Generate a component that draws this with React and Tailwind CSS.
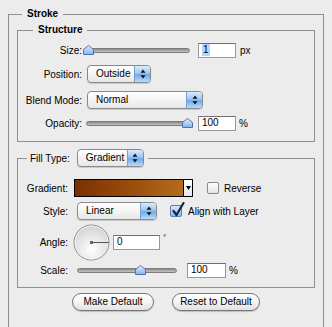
import React from 'react';

function Arrows() {
  return (
    <svg width="6" height="10" viewBox="0 0 6 10">
      <path d="M3 0.5 L5.5 3.8 H0.5 Z" fill="#111" />
      <path d="M3 9.5 L5.5 6.2 H0.5 Z" fill="#111" />
    </svg>
  );
}

function Popup({ className, label }) {
  return (
    <div className={`flex h-[18px] overflow-hidden rounded-[4px] border border-[#8a8a8a] bg-[linear-gradient(#ffffff,#f4f4f4_50%,#e6e6e6)] shadow-[0_1px_1px_rgba(0,0,0,0.15)] ${className}`}>
      <div className="flex flex-1 items-center pl-[8px] text-[10px] leading-none">{label}</div>
      <div className="flex w-[16px] items-center justify-center border-l border-[#7d9cc9] bg-[linear-gradient(#dcebfc,#9cc6f4_45%,#6fa8ec_55%,#b9dbfb)]">
        <Arrows />
      </div>
    </div>
  );
}

function Slider({ className, pos }) {
  return (
    <div className={`relative h-[12px] ${className}`}>
      <div className="absolute left-[3px] right-[3px] top-[4px] h-[5px] rounded-full border border-[#7b7b7b] bg-[linear-gradient(#8a8a8a,#c4c4c4)]" />
      <svg className="absolute top-[1px]" style={{ left: pos }} width="11" height="10" viewBox="0 0 11 10">
        <defs>
          <linearGradient id="thumbg" x1="0" y1="0" x2="0" y2="1">
            <stop offset="0" stopColor="#e4f0ff" />
            <stop offset="1" stopColor="#7fb2ee" />
          </linearGradient>
        </defs>
        <path d="M5.5 0.5 L10.5 4.5 V9.5 H0.5 V4.5 Z" fill="url(#thumbg)" stroke="#4f74ad" />
      </svg>
    </div>
  );
}

function TextBox({ className, children }) {
  return (
    <div className={`flex h-[15px] items-center border border-[#999] border-t-[#6f6f6f] bg-white pl-[3px] text-[10px] leading-none ${className}`}>
      {children}
    </div>
  );
}

function Check({ checked }) {
  if (checked) {
    return (
      <div className="relative h-[12px] w-[12px] rounded-[2px] border border-[#5a7fb8] bg-[linear-gradient(#d6e8fc,#88baf1)]">
        <svg className="absolute left-[1px] top-[-4px]" width="13" height="15" viewBox="0 0 13 15">
          <path d="M1.5 9 L4.5 13 L11.5 1" fill="none" stroke="#1b2640" strokeWidth="2.2" strokeLinecap="round" strokeLinejoin="round" />
        </svg>
      </div>
    );
  }
  return <div className="h-[12px] w-[12px] rounded-[2px] border border-[#8a8a8a] bg-[linear-gradient(#ffffff,#e4e4e4)]" />;
}

function Dial() {
  return (
    <svg width="37" height="37" viewBox="0 0 37 37">
      <defs>
        <radialGradient id="dialg" cx="0.5" cy="0.7" r="0.6">
          <stop offset="0" stopColor="#ffffff" />
          <stop offset="1" stopColor="#d8d8d8" />
        </radialGradient>
      </defs>
      <circle cx="18.5" cy="18.5" r="17.5" fill="url(#dialg)" stroke="#8a8a8a" />
      <circle cx="18.5" cy="18.5" r="16.5" fill="none" stroke="#f6f6f6" strokeWidth="0.8" />
      <rect x="17" y="17" width="3" height="3" fill="#6a6a6a" />
      <line x1="18.5" y1="18.5" x2="36" y2="18.5" stroke="#555" />
    </svg>
  );
}

export default function App() {
  return (
    <div className="h-[327px] w-[332px] overflow-hidden bg-[#ececec] px-[8px] pt-[7px] font-['Liberation_Sans',Arial,sans-serif] text-[10px] text-black">
      <fieldset className="h-[400px] border border-b-0 border-[#8f8f8f] pl-[8px] pr-[8px]">
        <legend className="ml-[5px] px-[5px] text-[10px] font-bold leading-[14px]">Stroke</legend>

        {/* Structure */}
        <fieldset className="mt-[2px] border border-[#8f8f8f] pb-[9px]">
          <legend className="ml-[15px] px-[5px] text-[10px] font-bold leading-[14px]">Structure</legend>
          <div className="mt-[4px] flex h-[18px] items-center">
            <div className="w-[64px] text-right">Size:</div>
            <Slider className="ml-[1px] w-[110px]" pos={0} />
            <TextBox className="ml-[5px] w-[38px]">
              <span className="bg-[#b5d5ff] px-[1px] leading-[12px]">1</span>
            </TextBox>
            <div className="ml-[4px]">px</div>
          </div>
          <div className="mt-[6px] flex h-[18px] items-center">
            <div className="w-[64px] text-right">Position:</div>
            <Popup className="ml-[5px] w-[64px]" label="Outside" />
          </div>
          <div className="mt-[8px] flex h-[18px] items-center">
            <div className="w-[64px] text-right">Blend Mode:</div>
            <Popup className="ml-[5px] w-[116px]" label="Normal" />
          </div>
          <div className="mt-[5px] flex h-[18px] items-center">
            <div className="w-[64px] text-right">Opacity:</div>
            <Slider className="ml-[1px] w-[110px]" pos={99} />
            <TextBox className="ml-[5px] w-[38px]">100</TextBox>
            <div className="ml-[3px]">%</div>
          </div>
        </fieldset>

        {/* Fill */}
        <fieldset className="mt-[7px] border border-[#8f8f8f] pb-[9px]">
          <legend className="ml-[9px] flex items-center pl-[3px] pr-[4px]">
            <span>Fill Type:</span>
            <Popup className="ml-[7px] w-[67px]" label="Gradient" />
          </legend>
          <div className="mt-[12px] flex h-[18px] items-center">
            <div className="w-[50px] text-right">Gradient:</div>
            <div className="ml-[6px] flex h-[18px] w-[119px] border border-black">
              <div className="flex-1 bg-[linear-gradient(90deg,#7a3100,#9a4f0c_55%,#b56c1d)]" />
              <div className="flex w-[9px] items-center justify-center border-l border-black bg-[linear-gradient(#ffffff,#dfe8f4)]">
                <svg width="5" height="4" viewBox="0 0 5 4"><path d="M0 0 H5 L2.5 4 Z" fill="#000" /></svg>
              </div>
            </div>
            <div className="ml-[14px]"><Check /></div>
            <div className="ml-[5px]">Reverse</div>
          </div>
          <div className="mt-[5px] flex h-[18px] items-center">
            <div className="w-[50px] text-right">Style:</div>
            <Popup className="ml-[9px] w-[80px]" label="Linear" />
            <div className="ml-[13px]"><Check checked /></div>
            <div className="ml-[6px]">Align with Layer</div>
          </div>
          <div className="mt-[4px] flex h-[36px] items-center">
            <div className="w-[50px] text-right">Angle:</div>
            <div className="ml-[5px] flex"><Dial /></div>
            <TextBox className="ml-[3px] w-[47px]">0</TextBox>
            <div className="mb-[8px] ml-[3px] text-[8px]">°</div>
          </div>
          <div className="mt-[2px] flex h-[16px] items-center">
            <div className="w-[50px] text-right">Scale:</div>
            <Slider className="ml-[6px] w-[106px]" pos={61} />
            <TextBox className="ml-[7px] w-[39px]">100</TextBox>
            <div className="ml-[3px]">%</div>
          </div>
        </fieldset>

        <div className="mt-[5px] flex justify-center gap-[18px]">
          <button className="h-[18px] w-[82px] rounded-full border border-[#777] bg-[linear-gradient(#ffffff,#f3f3f3_50%,#e2e2e2)] text-[10px] leading-none shadow-[0_1px_1px_rgba(0,0,0,0.2)]">
            Make Default
          </button>
          <button className="h-[18px] w-[88px] rounded-full border border-[#777] bg-[linear-gradient(#ffffff,#f3f3f3_50%,#e2e2e2)] text-[10px] leading-none shadow-[0_1px_1px_rgba(0,0,0,0.2)]">
            Reset to Default
          </button>
        </div>
      </fieldset>
    </div>
  );
}
